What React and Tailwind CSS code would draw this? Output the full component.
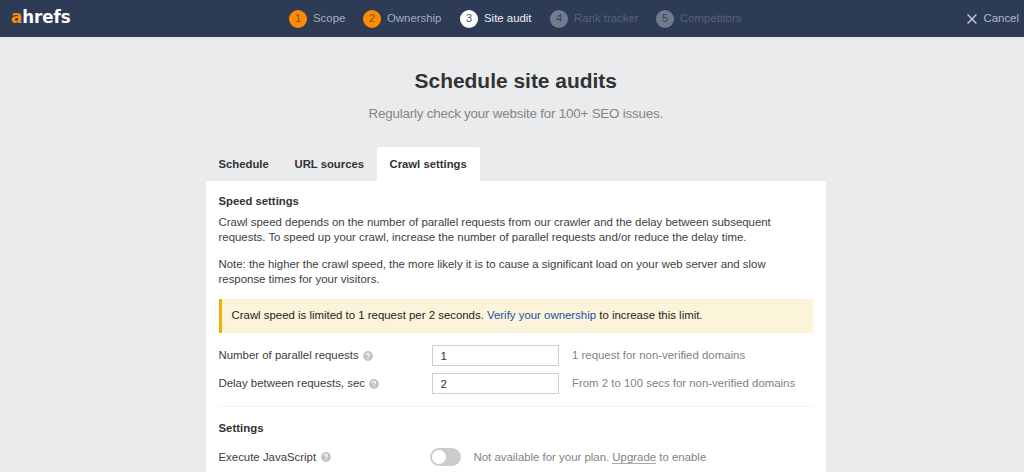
import React from "react";

const steps = [
  { n: 1, label: "Scope", w: "w-[56px]", dot: "bg-[#ff8b00] text-[#6b522c]", text: "text-[#a4adbb]" },
  { n: 2, label: "Ownership", w: "w-[79px]", dot: "bg-[#ff8b00] text-[#6b522c]", text: "text-[#a4adbb]" },
  { n: 3, label: "Site audit", w: "w-[72px]", dot: "bg-white text-[#4d5768]", text: "text-[#eef0f3]" },
  { n: 4, label: "Rank tracker", w: "w-[88px]", dot: "bg-[#727b8d] text-[#3b465c]", text: "text-[#56617a]" },
  { n: 5, label: "Competitors", w: "w-[88px]", dot: "bg-[#727b8d] text-[#3b465c]", text: "text-[#56617a]" },
];

function Help() {
  return (
    <svg className="h-[10px] w-[10px] shrink-0" viewBox="0 0 10 10" fill="none">
      <circle cx="5" cy="5" r="4.9" fill="#c3c3c3" />
      <path d="M3.4 4C3.4 2.9 4.1 2.4 5 2.4S6.6 3 6.6 3.8C6.6 4.8 5 4.9 5 6.1" stroke="white" strokeWidth="1.1" />
      <circle cx="5" cy="7.6" r=".65" fill="white" />
    </svg>
  );
}

function Field({ label, value, hint }) {
  return (
    <div className="flex h-[22px] items-center">
      <label className="flex w-[213px] items-center gap-[4.5px]">
        <span className="whitespace-nowrap">{label}</span>
        <Help />
      </label>
      <input
        className="h-[21px] w-[127px] border border-[#cfcfcf] bg-white px-[8px] text-[#333333] outline-none"
        defaultValue={value}
      />
      <span className="ml-[13.5px] whitespace-nowrap text-[#828282]">{hint}</span>
    </div>
  );
}

export default function App() {
  return (
    <div className="h-[472px] overflow-hidden bg-[#eaebed] font-['Liberation_Sans',Arial,sans-serif] text-[11.42px] leading-[14.5px] text-[#3d3d3d]">
      <header className="flex h-[37px] items-center bg-[#2e3b55] pl-[11px] pr-[5px] text-[11.4px]">
        <div className="w-[278px] pb-[3px] font-['DejaVu_Sans_Condensed','DejaVu_Sans',sans-serif] text-[18.5px] leading-[20px] font-bold text-white">
          <span className="text-[#ff8b00]">a</span>hrefs
        </div>
        <nav className="flex flex-1 items-center">
          {steps.map((s) => (
            <div key={s.n} className={`mr-[18px] flex shrink-0 items-center ${s.w}`}>
              <span className={`mr-[6px] flex h-[18px] w-[18px] shrink-0 items-center justify-center rounded-full text-[11px] ${s.dot}`}>{s.n}</span>
              <span className={`whitespace-nowrap ${s.text}`}>{s.label}</span>
            </div>
          ))}
        </nav>
        <button className="flex shrink-0 items-center gap-[7px] text-[#b4bbc7]">
          <svg className="h-[10px] w-[10px]" viewBox="0 0 10 10" stroke="#c7ccd4" strokeWidth="1.4">
            <path d="M.6.6l8.8 8.8M9.4.6L.6 9.4" />
          </svg>
          Cancel
        </button>
      </header>

      <main className="ml-[206px] w-[619.5px]">
        <h1 className="pt-[31px] text-center text-[20.95px] leading-[26px] font-bold text-[#333333]">Schedule site audits</h1>
        <p className="mt-[11px] text-center text-[13.4px] leading-[18px] tracking-[-0.21px] text-[#858585]">Regularly check your website for 100+ SEO issues.</p>

        <div className="mt-[24px] flex h-[34px] text-[11.3px] font-bold text-[#333333]">
          <div className="flex w-[76px] items-center pl-[12.5px]">Schedule</div>
          <div className="flex w-[95px] items-center pl-[12.5px] whitespace-nowrap">URL sources</div>
          <div className="flex w-[103px] items-center rounded-t-[2px] bg-white pl-[12.5px] whitespace-nowrap">Crawl settings</div>
        </div>

        <section className="h-[291px] bg-white px-[12.5px] pt-[13px]">
          <h2 className="text-[11.3px] font-bold text-[#333333]">Speed settings</h2>
          <p className="mt-[6.5px] whitespace-nowrap">
            Crawl speed depends on the number of parallel requests from our crawler and the delay between subsequent
            <br />
            requests. To speed up your crawl, increase the number of parallel requests and/or reduce the delay time.
          </p>
          <p className="mt-[13px] whitespace-nowrap">
            Note: the higher the crawl speed, the more likely it is to cause a significant load on your web server and slow
            <br />
            response times for your visitors.
          </p>
          <div className="mt-[12.5px] flex h-[34px] items-center border-l-[3px] border-[#f0b400] bg-[#fcf4da] pl-[10px] text-[#1c1c1c]">
            <p className="whitespace-nowrap">
              Crawl speed is limited to 1 request per 2 seconds. <a className="text-[#1752a6]">Verify your ownership</a> to increase this limit.
            </p>
          </div>
          <div className="mt-[12px] flex flex-col gap-[6px]">
            <Field label="Number of parallel requests" value="1" hint="1 request for non-verified domains" />
            <Field label="Delay between requests, sec" value="2" hint="From 2 to 100 secs for non-verified domains" />
          </div>
          <hr className="mt-[11px] border-[#f1f1f1]" />
          <h2 className="mt-[14px] font-bold text-[#333333]">Settings</h2>
          <div className="mt-[12px] flex h-[20px] items-center">
            <div className="flex w-[211.5px] items-center gap-[5px]">
              <span>Execute JavaScript</span>
              <Help />
            </div>
            <div className="h-[18px] w-[31px] rounded-full bg-[#cccccc] p-[2px]">
              <div className="h-[14px] w-[14px] rounded-full bg-white" />
            </div>
            <p className="ml-[12.5px] whitespace-nowrap text-[#828282]">
              Not available for your plan. <a className="border-b border-[#aaaaaa]">Upgrade</a> to enable
            </p>
          </div>
        </section>
      </main>
    </div>
  );
}
